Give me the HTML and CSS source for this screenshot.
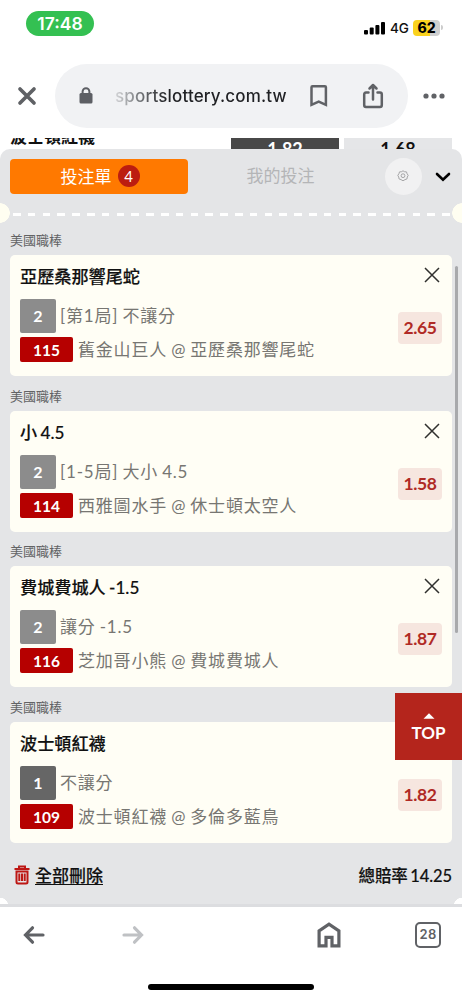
FILE: index.html
```
<!DOCTYPE html>
<html lang="zh-Hant">
<head>
<meta charset="utf-8">
<meta name="viewport" content="width=device-width, initial-scale=1">
<title>投注單</title>
<link rel="stylesheet" href="styles.css">
</head>
<body>
<div class="screen">
  <header class="status">
    <span class="clock">17:48</span>
    <div class="signals">
      <svg class="bars" width="22" height="14" viewBox="0 0 22 14"><rect x="0" y="9" width="4" height="4.500" rx="1"/><rect x="5.700" y="6.500" width="4" height="7" rx="1"/><rect x="11.400" y="4" width="4" height="9.500" rx="1"/><rect x="17" y="1" width="4" height="12.500" rx="1"/></svg>
      <span class="network">4G</span>
      <span class="battery">62</span><i class="battery-tip"></i>
    </div>
  </header>
  <div class="browser">
    <svg class="close-tab" width="20" height="20" viewBox="0 0 20 20"><path d="M3 3L17 17M17 3L3 17"/></svg>
    <div class="address">
      <svg class="lock" width="14" height="17" viewBox="0 0 14 17"><path class="shackle" d="M3.600 7V4.600a3.400 3.400 0 0 1 6.800 0V7"/><rect x=".5" y="6" width="13" height="10.500" rx="1.500"/></svg>
      <span class="url">sportslottery.com.tw</span>
      <svg class="bookmark" width="20" height="24" viewBox="0 0 20 24"><path d="M2.500 3.300Q2.500 2.300 3.500 2.300H15.900Q16.900 2.300 16.900 3.300V20.800L9.700 17.600L2.500 20.800Z"/></svg>
      <svg class="share" width="22" height="26" viewBox="0 0 22 26"><path d="M6.500 9.500H4Q2.200 9.500 2.200 11.500V22Q2.200 24 4 24H18Q19.800 24 19.800 22V11.500Q19.800 9.500 18 9.500H15.500M11 16.500V2M7.500 5.500L11 2L14.500 5.500"/></svg>
    </div>
    <svg class="more" width="22" height="6" viewBox="0 0 22 6"><circle cx="3" cy="3" r="2.600"/><circle cx="11" cy="3" r="2.600"/><circle cx="19" cy="3" r="2.600"/></svg>
  </div>
  <div class="page-row">
    <span class="row-team">波士頓紅襪</span>
    <span class="row-odd chosen">1.82</span>
    <span class="row-odd">1.68</span>
  </div>
  <main class="slip">
    <nav class="tabs">
      <div class="tab active"><span>投注單</span><span class="count">4</span></div>
      <div class="tab"><span>我的投注</span></div>
      <div class="settings"><svg width="12" height="12" viewBox="0 0 12 12"><path d="M4.500 1.700L6 .8L7.500 1.700L9.500 1.900L10.100 3.800L11.200 5.300L10.300 7L9.900 9L8 9.600L6 10.800L4 9.600L2.100 9L1.700 7L.8 5.300L1.900 3.800L2.500 1.900Z"/><circle cx="6" cy="5.700" r="1.900"/></svg></div>
      <svg class="chevron" width="16" height="10" viewBox="0 0 16 10"><path d="M2 2L8 7.800L14 2"/></svg>
    </nav>
    <div class="perforation"></div>
    <div class="bets">
      <section class="bet">
        <h2 class="league">美國職棒</h2>
        <article class="card">
          <div class="details">
            <h3 class="pick">亞歷桑那響尾蛇</h3>
            <p class="market"><b class="legs">2</b><span>[第1局] 不讓分</span></p>
            <p class="match"><b class="code">115</b><span>舊金山巨人 @ 亞歷桑那響尾蛇</span></p>
          </div>
          <div class="side"><svg class="remove" width="16" height="16" viewBox="0 0 16 16"><path d="M1 1L15 15M15 1L1 15"/></svg><span class="odds">2.65</span></div>
        </article>
      </section>
      <section class="bet">
        <h2 class="league">美國職棒</h2>
        <article class="card">
          <div class="details">
            <h3 class="pick">小 4.5</h3>
            <p class="market"><b class="legs">2</b><span>[1-5局] 大小 4.5</span></p>
            <p class="match"><b class="code">114</b><span>西雅圖水手 @ 休士頓太空人</span></p>
          </div>
          <div class="side"><svg class="remove" width="16" height="16" viewBox="0 0 16 16"><path d="M1 1L15 15M15 1L1 15"/></svg><span class="odds">1.58</span></div>
        </article>
      </section>
      <section class="bet">
        <h2 class="league">美國職棒</h2>
        <article class="card">
          <div class="details">
            <h3 class="pick">費城費城人 -1.5</h3>
            <p class="market"><b class="legs">2</b><span>讓分 -1.5</span></p>
            <p class="match"><b class="code">116</b><span>芝加哥小熊 @ 費城費城人</span></p>
          </div>
          <div class="side"><svg class="remove" width="16" height="16" viewBox="0 0 16 16"><path d="M1 1L15 15M15 1L1 15"/></svg><span class="odds">1.87</span></div>
        </article>
      </section>
      <section class="bet">
        <h2 class="league">美國職棒</h2>
        <article class="card">
          <div class="details">
            <h3 class="pick">波士頓紅襪</h3>
            <p class="market"><b class="legs single">1</b><span>不讓分</span></p>
            <p class="match"><b class="code">109</b><span>波士頓紅襪 @ 多倫多藍鳥</span></p>
          </div>
          <div class="side"><span class="odds only">1.82</span></div>
        </article>
      </section>
      <i class="scrollbar"></i>
      <div class="top-button"><svg width="12" height="6" viewBox="0 0 12 6"><path d="M.5 5.800L6 .2L11.500 5.800Z"/></svg><span>TOP</span></div>
    </div>
    <div class="summary">
      <svg class="trash" width="16" height="20" viewBox="0 0 16 20"><path d="M.5 4H15.500M5 4V1.500H11V4M2.500 6.500V17Q2.500 18.500 4 18.500H12Q13.500 18.500 13.500 17V6.500ZM5.300 8.500V16M8 8.500V16M10.700 8.500V16"/></svg>
      <span class="clear">全部刪除</span>
      <span class="total">總賠率 14.25</span>
    </div>
    <div class="tear"></div>
  </main>
  <footer class="toolbar">
    <svg class="back" width="22" height="20" viewBox="0 0 22 20"><path d="M20 10H2.500M9.500 2.800L2.500 10L9.500 17.200"/></svg>
    <svg class="forward" width="22" height="20" viewBox="0 0 22 20"><path d="M2 10H19.500M12.500 2.800L19.500 10L12.500 17.200"/></svg>
    <svg class="home" width="24" height="26" viewBox="0 0 24 26"><path d="M2.100 23.800V8.800L12 2.200L21.900 8.800V23.800H15V15.300H9V23.800Z"/></svg>
    <span class="tab-count">28</span>
    <i class="home-indicator"></i>
  </footer>
</div>
</body>
</html>
```
FILE: styles.css
```
* { box-sizing: border-box; }
body { margin: 0; background: #fff; font-family: Lato, "Noto Sans CJK TC", sans-serif; color: #111; }
h2, h3, p { margin: 0; }
svg { display: block; flex: none; fill: none; }
.screen { width: 462px; height: 1000px; overflow: hidden; display: flex; flex-direction: column; white-space: nowrap; }

.status { height: 64px; flex: none; display: flex; justify-content: space-between; align-items: flex-start; padding: 11px 19px 0 26px; font-family: Inter, sans-serif; }
.clock { width: 68px; height: 25px; border-radius: 13px; background: #34c052; color: #fff; font-size: 17.500px; line-height: 25px; font-weight: 600; text-align: center; }
.signals { display: flex; align-items: center; padding-top: 7px; height: 26px; }
.bars { fill: #000; }
.network { margin-left: 4px; font-size: 13.500px; font-weight: 500; width: 23px; }
.battery { width: 27px; height: 16px; border-radius: 4px; background: linear-gradient(90deg, #fad21e 62%, #cfcfd0 62%); font-weight: 800; font-size: 14px; line-height: 16px; text-align: center; color: #000; }
.battery-tip { width: 2px; height: 5px; margin-left: 1px; border-radius: 0 2px 2px 0; background: #ccc; }

.browser { height: 64px; flex: none; display: flex; align-items: center; padding-left: 17px; }
.close-tab { stroke: #5f6165; stroke-width: 3.700; stroke-linecap: round; }
.address { width: 353px; height: 64px; margin-left: 18px; border-radius: 32px; background: #f1f2f4; display: flex; align-items: center; padding-left: 24px; }
.lock { fill: #5d5f64; margin-top: -1px; }
.shackle { fill: none; stroke: #5d5f64; stroke-width: 2; }
.url { width: 173px; margin-left: 22px; font: 500 17px Inter, sans-serif; letter-spacing: .16px; background: linear-gradient(90deg, #d5d6d8 0, #777a7d 24px, #202124 52px); background-clip: text; color: transparent; }
.bookmark { margin-left: 21px; stroke: #606266; stroke-width: 2.500; }
.share { margin-left: 33px; stroke: #606266; stroke-width: 2.500; stroke-linecap: round; stroke-linejoin: round; }
.more { margin-left: 15px; fill: #606266; }

.page-row { height: 21px; flex: none; padding: 0 10px; display: flex; gap: 5px; clip-path: inset(10px 0 0); align-items: flex-end; font-size: 17px; font-weight: 700; }
.row-team { width: 216px; height: 21px; line-height: 17px; }
.row-odd { width: 108px; height: 11px; background: #e5e6e8; text-align: center; line-height: 23px; font-size: 18px; }
.chosen { background: #484848; color: #fff; }

.slip { position: relative; height: 758px; flex: none; border-radius: 10px 10px 0 0; background: #e4e5e7; display: flex; flex-direction: column; border-bottom: 3px solid #dcdde0; overflow: hidden; }
.tabs { height: 54px; flex: none; display: flex; align-items: center; padding-left: 10px; }
.tab { width: 178px; height: 35px; padding-bottom: 1px; border-radius: 4px; display: flex; align-items: center; justify-content: center; font-size: 17px; color: #b4b5b7; }
.tab:nth-child(2) { width: 185px; padding-bottom: 3px; }
.active { background: #ff7900; color: #fff; padding-left: 2px; }
.count { width: 22px; height: 22px; margin-left: 6px; border-radius: 50%; background: #bc1d10; font-size: 15px; line-height: 22px; text-align: center; }
.settings { width: 37px; height: 37px; margin-left: 12px; border-radius: 50%; background: #f1f1f2; display: flex; align-items: center; justify-content: center; }
.settings svg { stroke: #9d9d9f; stroke-width: .9; margin: -1px 2px 0 0; }
.chevron { margin-left: 13px; margin-top: 2px; stroke: #000; stroke-width: 2.600; stroke-linecap: round; }
.perforation { height: 20px; flex: none; background:
  radial-gradient(circle at 0 10px, #fffef1 9.500px, transparent 10px),
  radial-gradient(circle at 462px 10px, #fffef1 9.500px, transparent 10px),
  repeating-linear-gradient(90deg, #fff 0 7.500px, transparent 7.500px 14.800px) 12.500px 10px / 438px 3px no-repeat; }

.bets { position: relative; height: 622.500px; flex: none; padding: 0 10px; margin-top: -2px; }
.bet { height: 155.600px; }
.league { height: 34px; padding-top: 2px; line-height: 34px; font-size: 13px; font-weight: 400; color: #626365; }
.card { height: 121px; border-radius: 5px; background: #fffef5; display: flex; justify-content: space-between; padding: 10px 10px 0; }
.pick { height: 34px; font-size: 17.150px; line-height: 24px; font-weight: 500; -webkit-text-stroke: .15px #111; word-spacing: -1px; color: #111; }
.market, .match { display: flex; align-items: center; font-size: 17px; letter-spacing: .8px; word-spacing: -1px; color: #777672; }
.market { height: 34px; margin-bottom: 4px; }
.market span { padding-bottom: 3px; }
.match { height: 25px; }
.match span { padding-bottom: 2px; }
.legs, .code { color: #fff; text-align: center; letter-spacing: 0; font-weight: 700; border-radius: 2px; }
.legs { width: 36px; height: 34px; line-height: 34px; margin-right: 4px; background: #8c8c8c; font-size: 16px; }
.single { background: #666; }
.code { width: 53px; height: 25px; line-height: 26px; margin-right: 5px; background: #b60000; font-size: 15.500px; }
.side { display: flex; flex-direction: column; align-items: flex-end; width: 44px; }
.remove { margin: 2px 2px 0 0; stroke: #30302e; stroke-width: 1.500; }
.odds { width: 44px; height: 32px; margin-top: 29px; border-radius: 4px; background: #f6e6df; color: #b02a25; font-size: 17.500px; letter-spacing: -.4px; line-height: 32px; font-weight: 700; text-align: center; }
.only { margin-top: 47px; }
.scrollbar { position: absolute; right: 4px; top: 45px; width: 3.500px; height: 367px; border-radius: 2px; background: #a8a9ac; }
.top-button { position: absolute; right: 0; top: 472px; width: 67px; height: 67px; background: #b4251c; color: #fff; display: flex; flex-direction: column; align-items: center; padding-top: 20px; font-size: 17px; line-height: 28px; font-weight: 700; }
.top-button svg { fill: #fff; }
.summary { display: flex; align-items: center; height: 61px; padding: 2px 10px 0 14px; font-size: 17px; font-weight: 500; -webkit-text-stroke: .15px #111; }
.trash { stroke: #bd1714; stroke-width: 2; margin-right: 5px; }
.clear { text-decoration: underline; text-underline-offset: 2px; text-decoration-thickness: 1px; }
.total { margin-left: auto; font-size: 16.500px; word-spacing: -1.500px; letter-spacing: -.1px; }
.tear { position: absolute; left: 0; right: 0; bottom: 0; height: 6px; background: radial-gradient(circle at 0 8px, #fff 8px, transparent 8.500px), radial-gradient(circle at 462px 8px, #fff 8px, transparent 8.500px); }

.toolbar { position: relative; height: 93px; display: flex; align-items: flex-start; padding: 15px 21px 0 23px; }
.toolbar svg { stroke: #606266; stroke-width: 3.200; stroke-linecap: round; }
.back { margin-top: 3px; }
.toolbar .forward { margin: 3px 0 0 77px; stroke: #bfc1c4; }
.toolbar .home { margin-left: 173px; stroke-linecap: butt; }
.tab-count { width: 26px; height: 26px; margin-left: auto; border: 2.500px solid #606266; border-radius: 5px; color: #606266; font: 600 13px/21px Inter, sans-serif; text-align: center; letter-spacing: .3px; }
.home-indicator { position: absolute; left: 148px; bottom: 10px; width: 166px; height: 6px; border-radius: 3px; background: #000; }
```
